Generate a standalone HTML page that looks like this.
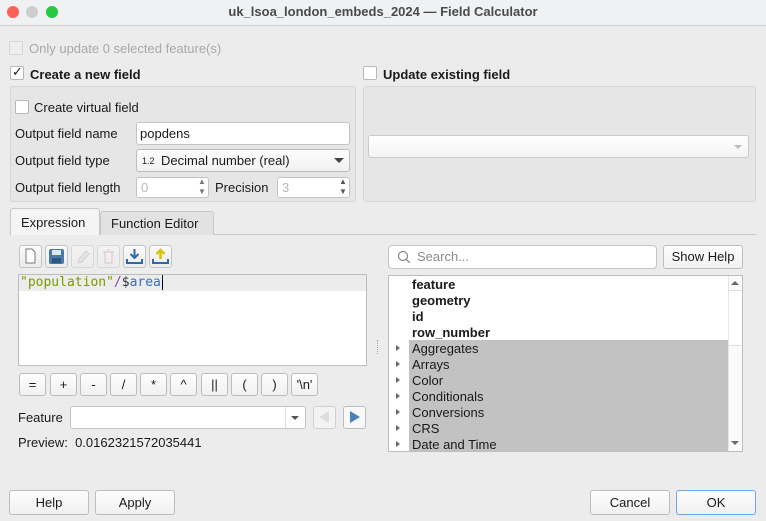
<!DOCTYPE html>
<html><head><meta charset="utf-8"><style>
*{box-sizing:border-box;margin:0;padding:0}
body{width:766px;height:521px;background:#ececec;font-family:"Liberation Sans",sans-serif;font-size:13px;color:#1a1a1a;position:relative;overflow:hidden}
.a{position:absolute}
.t{position:absolute;white-space:nowrap;line-height:16px}
.cb{position:absolute;width:14px;height:14px;border:1px solid #b8b8b8;background:#fff;border-radius:2px}
.inp{position:absolute;background:#fff;border:1px solid #c3c3c3;border-radius:3px}
.btn{position:absolute;background:linear-gradient(#fdfdfd,#f1f1f1);border:1px solid #bdbdbd;border-radius:3px;text-align:center;font-size:13px;line-height:21px}
.grp{position:absolute;border:1px solid #d6d6d6;border-radius:3px;background:#e6e6e6}
.tb{position:absolute;top:245px;width:23px;height:23px;border:1px solid #c4c4c4;border-radius:3px;background:linear-gradient(#fafafa,#ececec)}
.op{position:absolute;top:373px;height:23px;width:27px;border:1px solid #bdbdbd;border-radius:3px;background:linear-gradient(#fdfdfd,#f1f1f1);text-align:center;line-height:21px;font-size:13px}
.row{position:absolute;left:412px;height:16px;line-height:16px;padding-top:1px}
.arr{position:absolute;left:396px;width:0;height:0;border-left:4px solid #666;border-top:3.5px solid transparent;border-bottom:3.5px solid transparent}
</style></head><body>
<div class="a" style="left:0;top:0;width:766px;height:26px;background:#eff1f2;border-bottom:1px solid #cfcfcf"></div>
<div class="a" style="left:7px;top:6px;width:12px;height:12px;border-radius:50%;background:#fe5f57"></div>
<div class="a" style="left:26px;top:6px;width:12px;height:12px;border-radius:50%;background:#cdcdcd"></div>
<div class="a" style="left:46px;top:6px;width:12px;height:12px;border-radius:50%;background:#28c840"></div>
<div class="t" style="left:0;width:766px;text-align:center;top:4px;font-weight:bold;color:#4a4a4a">uk_lsoa_london_embeds_2024 — Field Calculator</div>

<div class="cb" style="left:9px;top:41px;border-color:#d4d4d4;background:#eee"></div>
<div class="t" style="left:29px;top:41px;color:#a8a8a8">Only update 0 selected feature(s)</div>

<div class="cb" style="left:10px;top:66px"></div>
<div class="t" style="left:12px;top:64px;font-size:13px">✓</div>
<div class="t" style="left:30px;top:67px;font-weight:bold">Create a new field</div>
<div class="grp" style="left:10px;top:86px;width:346px;height:116px"></div>
<div class="cb" style="left:15px;top:100px"></div>
<div class="t" style="left:34px;top:100px">Create virtual field</div>
<div class="t" style="left:15px;top:126px">Output field name</div>
<div class="t" style="left:15px;top:153px">Output field type</div>
<div class="t" style="left:15px;top:180px">Output field length</div>
<div class="inp" style="left:136px;top:122px;width:214px;height:23px"></div>
<div class="t" style="left:140px;top:126px">popdens</div>
<div class="btn" style="left:136px;top:149px;width:214px;height:23px"></div>
<div class="t" style="left:142px;top:153px;font-size:9px">1.2</div>
<div class="t" style="left:161px;top:153px">Decimal number (real)</div>
<div class="a" style="left:334px;top:158px;border-left:5px solid transparent;border-right:5px solid transparent;border-top:5px solid #444"></div>
<div class="inp" style="left:136px;top:177px;width:73px;height:21px"></div>
<div class="t" style="left:141px;top:180px;color:#b8b8b8">0</div>
<div class="t" style="left:198px;top:177px;font-size:8px;color:#777;line-height:10px">▲<br>▼</div>
<div class="t" style="left:215px;top:180px">Precision</div>
<div class="inp" style="left:277px;top:177px;width:73px;height:21px"></div>
<div class="t" style="left:282px;top:180px;color:#b8b8b8">3</div>
<div class="t" style="left:339px;top:177px;font-size:8px;color:#555;line-height:10px">▲<br>▼</div>

<div class="cb" style="left:363px;top:66px"></div>
<div class="t" style="left:383px;top:67px;font-weight:bold">Update existing field</div>
<div class="grp" style="left:363px;top:86px;width:393px;height:116px"></div>
<div class="a" style="left:368px;top:135px;width:381px;height:23px;border:1px solid #cacaca;border-radius:3px;background:linear-gradient(#fff,#f3f3f3)"></div>
<div class="a" style="left:734px;top:145px;border-left:4px solid transparent;border-right:4px solid transparent;border-top:4px solid #bbb"></div>

<div class="a" style="left:10px;top:234px;width:746px;height:1px;background:#c8c8c8"></div>
<div class="a" style="left:10px;top:208px;width:90px;height:27px;border:1px solid #c8c8c8;border-bottom:none;border-radius:3px 3px 0 0;background:#f4f4f4"></div>
<div class="t" style="left:21px;top:215px">Expression</div>
<div class="a" style="left:100px;top:211px;width:114px;height:24px;border:1px solid #c8c8c8;border-bottom:none;border-radius:3px 3px 0 0;background:#e2e2e2"></div>
<div class="t" style="left:111px;top:216px">Function Editor</div>

<div class="tb" style="left:19px"><svg width="21" height="21"><path d="M6 3h6l3 3v11H6z" fill="#fff" stroke="#777"/></svg></div>
<div class="tb" style="left:45px"><svg width="21" height="21"><rect x="3" y="3" width="15" height="15" rx="2" fill="#4a78a8"/><rect x="6" y="4" width="9" height="5" fill="#dce6f0"/><rect x="6" y="12" width="9" height="5" fill="#2d5680"/></svg></div>
<div class="tb" style="left:71px;opacity:.5"><svg width="21" height="21"><path d="M6 17l1-4 7-8 3 3-7 8z" fill="#ddd" stroke="#bbb"/></svg></div>
<div class="tb" style="left:97px;opacity:.5"><svg width="21" height="21"><path d="M5 6h11M7 6v11h7V6M9 4h3" fill="none" stroke="#c99"/></svg></div>
<div class="tb" style="left:123px"><svg width="21" height="21"><path d="M10.5 3v9M6.5 8l4 4 4-4" fill="none" stroke="#2f67a8" stroke-width="2"/><path d="M3 13v4h15v-4" fill="none" stroke="#2f67a8" stroke-width="2"/></svg></div>
<div class="tb" style="left:149px"><svg width="21" height="21"><path d="M10.5 13V5M6.5 8l4-4 4 4" fill="none" stroke="#d8c400" stroke-width="2.5"/><path d="M3 13v4h15v-4" fill="none" stroke="#2f67a8" stroke-width="2"/></svg></div>

<div class="a" style="left:18px;top:274px;width:349px;height:92px;background:#fff;border:1px solid #bdbdbd"></div>
<div class="a" style="left:19px;top:275px;width:347px;height:16px;background:#ececec"></div>
<div class="t" style="left:20px;top:275px;font-family:'DejaVu Sans Mono','Liberation Mono',monospace;font-size:13px"><span style="color:#7a9a00">"population"</span><span style="color:#8a4aa8">/</span><span style="color:#333">$</span><span style="color:#3b6fb6">area</span><span style="border-left:1px solid #000;margin-left:1px"></span></div>
<div class="a" style="left:377px;top:340px;width:1px;height:14px;border-left:1px dotted #aaa"></div>

<div class="op" style="left:19px">=</div>
<div class="op" style="left:50px">+</div>
<div class="op" style="left:80px">-</div>
<div class="op" style="left:110px">/</div>
<div class="op" style="left:140px">*</div>
<div class="op" style="left:170px">^</div>
<div class="op" style="left:201px">||</div>
<div class="op" style="left:231px">(</div>
<div class="op" style="left:261px">)</div>
<div class="op" style="left:291px">'\n'</div>

<div class="t" style="left:18px;top:410px">Feature</div>
<div class="inp" style="left:70px;top:406px;width:236px;height:23px"></div>
<div class="a" style="left:285px;top:407px;width:1px;height:21px;background:#ddd"></div>
<div class="a" style="left:291px;top:416px;border-left:4px solid transparent;border-right:4px solid transparent;border-top:4px solid #555"></div>
<div class="a" style="left:313px;top:406px;width:23px;height:23px;border:1px solid #d0d0d0;border-radius:3px;background:#f3f3f3"></div>
<div class="a" style="left:319px;top:411px;border-right:10px solid #ddd;border-top:6.5px solid transparent;border-bottom:6.5px solid transparent"></div>
<div class="a" style="left:343px;top:406px;width:23px;height:23px;border:1px solid #bdbdbd;border-radius:3px;background:#f8f8f8"></div>
<div class="a" style="left:350px;top:411px;border-left:10px solid #4d7fb8;border-top:6.5px solid transparent;border-bottom:6.5px solid transparent"></div>
<div class="t" style="left:18px;top:435px">Preview:&nbsp; 0.0162321572035441</div>

<div class="inp" style="left:388px;top:245px;width:269px;height:24px;border-radius:4px"></div>
<svg class="a" style="left:397px;top:250px" width="14" height="14"><circle cx="6" cy="6" r="4.5" fill="none" stroke="#888" stroke-width="1.2"/><path d="M9.3 9.3l3.5 3.5" stroke="#888" stroke-width="1.3"/></svg>
<div class="t" style="left:417px;top:249px;color:#8a8a8a">Search...</div>
<div class="btn" style="left:663px;top:245px;width:80px;height:24px;line-height:22px">Show Help</div>

<div class="a" style="left:388px;top:275px;width:355px;height:177px;background:#fff;border:1px solid #bdbdbd"></div>
<div class="a" style="left:409px;top:340px;width:319px;height:111px;background:#c2c2c2"></div>
<div class="a" style="left:728px;top:276px;width:14px;height:175px;background:#fafafa;border-left:1px solid #e6e6e6"></div>
<div class="a" style="left:729px;top:290px;width:13px;height:56px;background:#fff;border-top:1px solid #ddd;border-bottom:1px solid #ddd"></div>
<div class="a" style="left:731px;top:281px;border-left:4px solid transparent;border-right:4px solid transparent;border-bottom:4px solid #666"></div>
<div class="a" style="left:731px;top:441px;border-left:4px solid transparent;border-right:4px solid transparent;border-top:4px solid #666"></div>
<div class="row" style="top:276px;font-weight:bold">feature</div>
<div class="row" style="top:292px;font-weight:bold">geometry</div>
<div class="row" style="top:308px;font-weight:bold">id</div>
<div class="row" style="top:324px;font-weight:bold">row_number</div>
<div class="row" style="top:340px">Aggregates</div><div class="arr" style="top:345px"></div>
<div class="row" style="top:356px">Arrays</div><div class="arr" style="top:361px"></div>
<div class="row" style="top:372px">Color</div><div class="arr" style="top:377px"></div>
<div class="row" style="top:388px">Conditionals</div><div class="arr" style="top:393px"></div>
<div class="row" style="top:404px">Conversions</div><div class="arr" style="top:409px"></div>
<div class="row" style="top:420px">CRS</div><div class="arr" style="top:425px"></div>
<div class="row" style="top:436px;height:15px;overflow:hidden">Date and Time</div><div class="arr" style="top:441px"></div>

<div class="btn" style="left:9px;top:490px;width:80px;height:25px;line-height:23px">Help</div>
<div class="btn" style="left:95px;top:490px;width:80px;height:25px;line-height:23px">Apply</div>
<div class="btn" style="left:590px;top:490px;width:80px;height:25px;line-height:23px">Cancel</div>
<div class="btn" style="left:676px;top:490px;width:80px;height:25px;line-height:23px;border-color:#6ea6e8">OK</div>
</body></html>
